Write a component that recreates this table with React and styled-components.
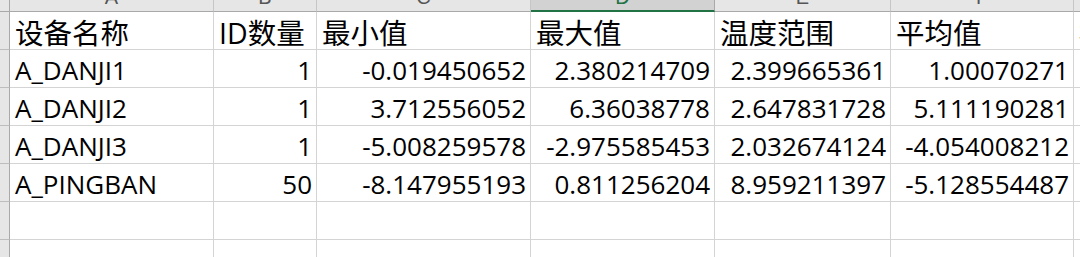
import React from 'react';
import styled, { createGlobalStyle } from 'styled-components';

const GlobalStyle = createGlobalStyle`
  html, body {
    margin: 0;
    padding: 0;
    background: #ffffff;
    overflow: hidden;
  }
`;

const COLS = ['A', 'B', 'C', 'D', 'E', 'F', 'G'];
const WIDTHS = [204, 103, 214, 184, 176, 183, 120];
const SELECTED = 'D';

const HEADERS = ['设备名称', 'ID数量', '最小值', '最大值', '温度范围', '平均值', '标准差'];

const ROWS = [
  ['A_DANJI1', 1, '-0.019450652', '2.380214709', '2.399665361', '1.00070271'],
  ['A_DANJI2', 1, '3.712556052', '6.36038778', '2.647831728', '5.111190281'],
  ['A_DANJI3', 1, '-5.008259578', '-2.975585453', '2.032674124', '-4.054008212'],
  ['A_PINGBAN', 50, '-8.147955193', '0.811256204', '8.959211397', '-5.128554487'],
  [],
  [],
];

const Sheet = styled.div`
  width: 1080px;
  height: 257px;
  overflow: hidden;
  display: grid;
  grid-template-columns: 10px ${WIDTHS.map((w) => `${w}px`).join(' ')};
  grid-auto-rows: 38px;
  grid-template-rows: 12px;
  font-family: 'Open Sans', 'Noto Sans CJK SC', sans-serif;
  color: #000;
`;

const Corner = styled.div`
  background: #e6e6e6;
  border-right: 1px solid #a9a9a9;
  border-bottom: 1px solid #a9a9a9;
  box-sizing: border-box;
`;

const ColHead = styled.div`
  box-sizing: border-box;
  background: ${(p) => (p.$selected ? '#d2d2d2' : '#e6e6e6')};
  border-right: 1px solid ${(p) => (p.$selected ? '#a9a9a9' : '#c6c6c6')};
  border-bottom: ${(p) => (p.$selected ? '2px solid #217346' : '1px solid #a9a9a9')};
  overflow: hidden;
  display: flex;
  justify-content: center;
  align-items: flex-end;
  padding-bottom: ${(p) => (p.$selected ? '3px' : '4px')};
  font-family: 'Liberation Sans', sans-serif;
  font-size: 20px;
  line-height: 20px;
  color: ${(p) => (p.$selected ? '#217346' : '#555')};
`;

const RowHead = styled.div`
  box-sizing: border-box;
  background: #e6e6e6;
  border-right: 1px solid #a9a9a9;
  border-bottom: 1px solid #bdbdbd;
`;

const Cell = styled.div`
  box-sizing: border-box;
  border-right: 1px solid #d4d4d4;
  border-bottom: 1px solid #d4d4d4;
  display: flex;
  align-items: flex-end;
  justify-content: ${(p) => (p.$num ? 'flex-end' : 'flex-start')};
  padding: 0 4px ${(p) => (p.$head ? '2px' : '3px')} 5px;
  font-size: ${(p) => (p.$head ? '28.5px' : '26px')};
  line-height: 27px;
  white-space: nowrap;
  overflow: hidden;
`;

const App = () => (
  <>
    <GlobalStyle />
    <Sheet>
      <Corner />
      {COLS.map((c) => (
        <ColHead key={c} $selected={c === SELECTED}>
          {c}
        </ColHead>
      ))}

      <RowHead />
      {HEADERS.map((h, i) => (
        <Cell key={i} $head>
          {h}
        </Cell>
      ))}

      {ROWS.map((row, r) => (
        <React.Fragment key={r}>
          <RowHead />
          {COLS.map((c, i) => {
            const v = row[i];
            return (
              <Cell key={c} $num={i > 0}>
                {v !== undefined ? v : ''}
              </Cell>
            );
          })}
        </React.Fragment>
      ))}
    </Sheet>
  </>
);

export default App;
